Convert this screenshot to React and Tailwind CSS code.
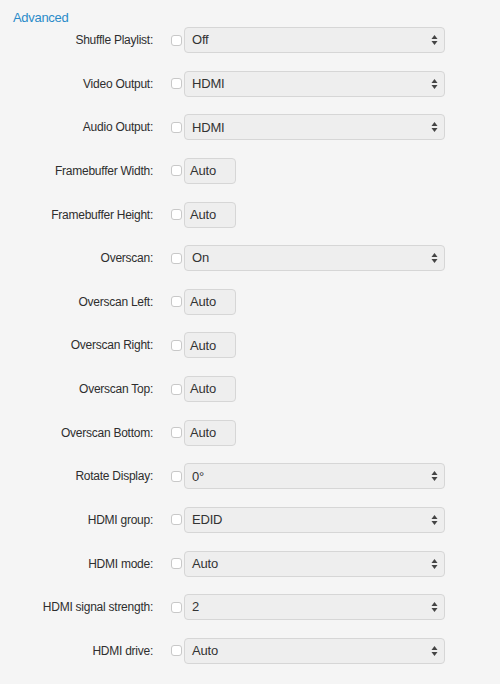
const rows = [
  { label: "Shuffle Playlist:", value: "Off", select: true },
  { label: "Video Output:", value: "HDMI", select: true },
  { label: "Audio Output:", value: "HDMI", select: true },
  { label: "Framebuffer Width:", value: "Auto" },
  { label: "Framebuffer Height:", value: "Auto" },
  { label: "Overscan:", value: "On", select: true },
  { label: "Overscan Left:", value: "Auto" },
  { label: "Overscan Right:", value: "Auto" },
  { label: "Overscan Top:", value: "Auto" },
  { label: "Overscan Bottom:", value: "Auto" },
  { label: "Rotate Display:", value: "0°", select: true },
  { label: "HDMI group:", value: "EDID", select: true },
  { label: "HDMI mode:", value: "Auto", select: true },
  { label: "HDMI signal strength:", value: "2", select: true },
  { label: "HDMI drive:", value: "Auto", select: true },
];

function Arrows() {
  return (
    <svg width="7" height="12" viewBox="0 0 7 12" className="text-[#444]">
      <path d="M3.5 1 L6.5 5 L0.5 5 Z" fill="currentColor" />
      <path d="M3.5 11 L6.5 7 L0.5 7 Z" fill="currentColor" />
    </svg>
  );
}

export default function App() {
  return (
    <div
      className="w-[500px] h-[684px] bg-[#f5f5f5] text-[#333]"
      style={{ fontFamily: '"Liberation Sans", Arial, sans-serif' }}
    >
      {/* Header */}
      <div className="pt-[10px] pl-[13px] h-[27px] text-[13px] leading-[16px] tracking-[-0.3px] text-[#2a8bc9]">
        Advanced
      </div>

      {/* Rows */}
      <div className="flex flex-col gap-[17.64px]">
        {rows.map((r) => (
          <div key={r.label} className="flex items-center h-[26px]">
            <div className="w-[153px] text-right text-[12px] tracking-[-0.25px] text-[#2e2e2e]">{r.label}</div>
            <div className="ml-[18px] w-[11px] h-[11px] rounded-[3px] border border-[#c8c8c8] bg-white" />
            {r.select ? (
              <div className="ml-[2px] w-[261px] h-[26px] rounded-[4px] border border-[#d6d6d6] bg-[#eeeeee] flex items-center justify-between pl-[7px] pr-[6px] text-[13px] tracking-[-0.2px]">
                <span>{r.value}</span>
                <Arrows />
              </div>
            ) : (
              <div className="ml-[2px] w-[52px] h-[26px] rounded-[4px] border border-[#d6d6d6] bg-[#eeeeee] flex items-center pl-[5px] text-[13px] tracking-[-0.2px]">
                {r.value}
              </div>
            )}
          </div>
        ))}
      </div>
    </div>
  );
}
